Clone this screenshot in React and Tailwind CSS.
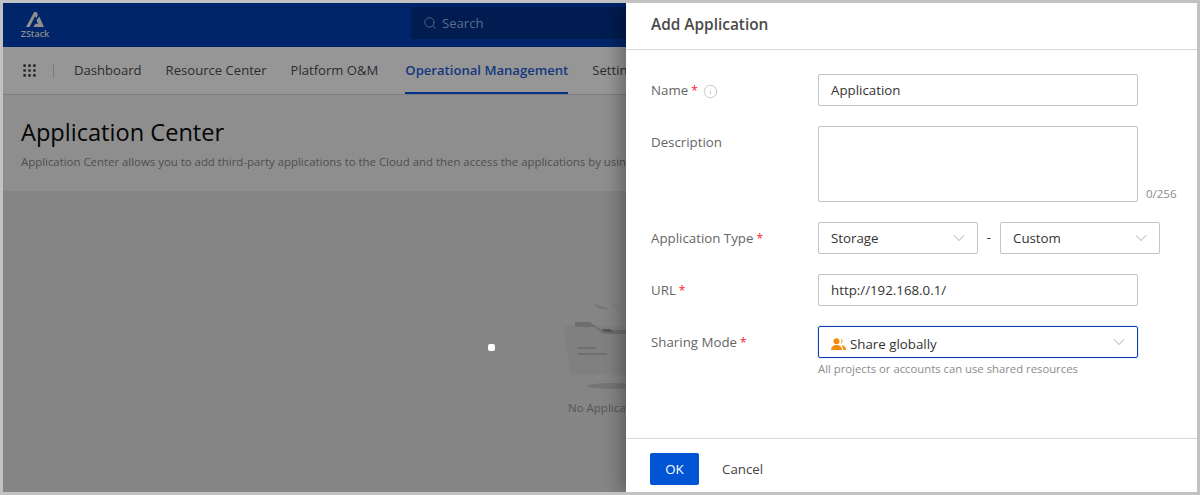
import { ChevronDown, Info, Search } from 'lucide-react';

const navItems = ['Dashboard', 'Resource Center', 'Platform O&M'];

function Logo() {
  return (
    <div className="flex w-[30px] flex-col items-center">
      <svg width="18" height="15" viewBox="0 0 18 15" fill="#8f8f8f">
        <path d="M8.2 0h2.4l1.3 2.8-1.5 3.4L9 4.2 3.6 15H0z" />
        <path d="M10.4 8.2l2.9-3.6L18 15H7.4l2-3.3h2.6z" />
      </svg>
      <span className="mt-[2px] text-[9px] leading-[10px] font-semibold text-[#8f8f8f]">ZStack</span>
    </div>
  );
}

function AppsIcon() {
  return (
    <svg width="13" height="13" viewBox="0 0 13 13" fill="#262626">
      <rect x="0.3" y="0.3" width="2.6" height="2.6" rx="0.7" />
      <rect x="5.2" y="0.3" width="2.6" height="2.6" rx="0.7" />
      <rect x="10.1" y="0.3" width="2.6" height="2.6" rx="0.7" />
      <rect x="0.3" y="5.2" width="2.6" height="2.6" rx="0.7" />
      <rect x="5.2" y="5.2" width="2.6" height="2.6" rx="0.7" />
      <rect x="10.1" y="5.2" width="2.6" height="2.6" rx="0.7" />
      <rect x="0.3" y="10.1" width="2.6" height="2.6" rx="0.7" />
      <rect x="5.2" y="10.1" width="2.6" height="2.6" rx="0.7" />
      <rect x="10.1" y="10.1" width="2.6" height="2.6" rx="0.7" />
    </svg>
  );
}

function EmptyFolder() {
  return (
    <svg width="120" height="90" viewBox="0 0 120 90" className="shrink-0">
      <path d="M31 3l19 6-12 0z" fill="#777777" />
      <path d="M50 5l8 1-8 1z" fill="#7b7b7b" />
      <path d="M2 26h96v49H10z" fill="#808080" />
      <path d="M14 22h15l11 8h60v4H42l-8-7H14z" fill="#6e6e6e" />
      <path d="M40 29h9l3 3H44z" fill="#555555" />
      <rect x="16" y="47" width="19" height="2" fill="#6f6f6f" />
      <rect x="17" y="53" width="29" height="2" fill="#6f6f6f" />
      <ellipse cx="51" cy="86" rx="25" ry="3" fill="#757575" />
    </svg>
  );
}

function Label({ text, required, info }) {
  return (
    <div className="flex h-8 w-[167px] shrink-0 items-center pt-[2px] text-[13.3px] text-[#666666]">
      {text}
      {required && <span className="ml-[3px] text-xs text-[#f5222d]">*</span>}
      {info && <Info className="ml-[5px] h-[15px] w-[15px] text-[#c4c4c4]" strokeWidth={1.5} />}
    </div>
  );
}

function Select({ value }) {
  return (
    <div className="flex h-8 w-40 items-center justify-between rounded-[2px] border border-[#c4c4c4] pr-2 pl-3 text-[13.3px] text-[#333333]">
      <span className="pt-[2px]">{value}</span>
      <ChevronDown className="h-5 w-5 text-[#bdbdbd]" strokeWidth={1.25} />
    </div>
  );
}

export default function App() {
  return (
    <div className="relative h-[495px] w-[1200px] overflow-hidden border-[3px] border-[#c2c2c2] bg-[#858585] font-['Open_Sans',sans-serif]">
      {/* Page under the mask */}
      <div className="flex h-11 items-center bg-[#00256a]">
        <div className="ml-[17px]">
          <Logo />
        </div>
        <div className="mb-1 ml-[361px] flex h-8 flex-1 items-center gap-[5px] bg-[#001c50] pl-3 text-[13.1px] text-[#5d6e8d]">
          <Search className="h-[14px] w-[14px]" strokeWidth={1.5} />
          <span className="pt-[2px]">Search</span>
        </div>
      </div>

      <div className="flex h-12 items-center border-b border-[#7f7f7f] bg-[#969696] pl-5 text-[13.1px] text-[#2c2c2c]">
        <AppsIcon />
        <div className="mr-5 ml-[17px] h-[14px] w-px bg-[#7a7a7a]" />
        <div className="flex h-full items-center gap-6">
          {navItems.map((item) => (
            <span key={item}>{item}</span>
          ))}
          <span className="ml-[3px] flex h-full items-center border-b-2 border-[#003087] pt-[2px] font-semibold whitespace-nowrap text-[#13367e]">
            Operational Management
          </span>
          <span className="whitespace-nowrap">Settings</span>
        </div>
      </div>

      <div className="h-[96px] bg-[#8e8e8e] px-[18px] pt-[19px]">
        <h1 className="text-[23.6px] leading-9 font-medium text-[#050505]">Application Center</h1>
        <p className="mt-[3px] text-[11.4px] leading-[18px] whitespace-nowrap text-[#4f4f4f]">
          Application Center allows you to add third-party applications to the Cloud and then access the applications by using the Cloud.
        </p>
      </div>

      <div className="flex flex-col items-start pt-[109px] pl-[558px]">
        <EmptyFolder />
        <span className="mt-[9px] ml-[7px] text-[11.5px] leading-[18px] whitespace-nowrap text-[#555555]">No Applications</span>
      </div>

      {/* Pointer marker */}
      <div className="absolute top-[341px] left-[485px] h-[7px] w-[7px] rounded-[2px] bg-white" />

      {/* Drawer */}
      <div className="absolute top-0 right-0 bottom-0 flex w-[571px] flex-col bg-white shadow-[-6px_0_16px_rgba(0,0,0,0.3)]">
        <div className="flex h-[47px] shrink-0 items-center border-b border-[#d9d9d9] pb-[2px] pl-[25px] text-[15.4px] font-semibold text-[#4a4a4a]">
          Add Application
        </div>

        <div className="flex flex-1 flex-col gap-5 pt-6 pl-[25px]">
          <div className="flex">
            <Label text="Name" required info />
            <div className="flex h-8 w-80 items-center rounded-[2px] border border-[#c4c4c4] px-3 pt-[2px] text-[13.3px] text-[#333333]">
              Application
            </div>
          </div>

          <div className="flex">
            <Label text="Description" />
            <div className="h-[76px] w-80 rounded-[2px] border border-[#c4c4c4]" />
            <span className="mt-[59px] ml-2 text-[11.5px] leading-[17px] text-[#8c8c8c]">0/256</span>
          </div>

          <div className="flex">
            <Label text="Application Type" required />
            <Select value="Storage" />
            <span className="flex w-[22px] items-center justify-center text-[13.3px] text-[#333333]">-</span>
            <Select value="Custom" />
          </div>

          <div className="flex">
            <Label text="URL" required />
            <div className="flex h-8 w-80 items-center rounded-[2px] border border-[#c4c4c4] px-3 pt-[2px] text-[13.3px] text-[#333333]">
              http://192.168.0.1/
            </div>
          </div>

          <div className="flex">
            <Label text="Sharing Mode" required />
            <div>
              <div className="flex h-8 w-80 items-center justify-between rounded-[2px] border border-[#0b3fb0] pr-2 pl-3 text-[13.3px] text-[#333333] shadow-[0_0_0_1px_#e6f0ff]">
                <span className="flex items-center gap-[4px] pt-[5px]">
                  <svg width="15" height="13" viewBox="0 0 15 13" fill="#f58a0b">
                    <circle cx="5.5" cy="3.2" r="3" />
                    <path d="M0 12c0-3 2.400-5 5.500-5s5.500 2 5.500 5z" />
                    <path d="M9.500.500a2.800 2.800 0 0 1 0 5.400 4.300 4.300 0 0 0 0-5.400z" />
                    <path d="M10.500 7c2.500.2 4.500 2 4.500 5h-3c0-2-.5-3.600-1.500-5z" />
                  </svg>
                  Share globally
                </span>
                <ChevronDown className="h-5 w-5 text-[#bdbdbd]" strokeWidth={1.25} />
              </div>
              <p className="mt-[2px] text-[11.3px] leading-[18px] text-[#8c8c8c]">
                All projects or accounts can use shared resources
              </p>
            </div>
          </div>
        </div>

        <div className="flex h-[54px] shrink-0 items-start gap-[23px] border-t border-[#d9d9d9] pt-[14px] pl-6">
          <button className="h-8 w-[49px] rounded-[2px] bg-[#0055d4] pt-[2px] text-[13.3px] text-white">OK</button>
          <button className="h-8 pt-[2px] text-[13.3px] text-[#444444]">Cancel</button>
        </div>
      </div>
    </div>
  );
}
